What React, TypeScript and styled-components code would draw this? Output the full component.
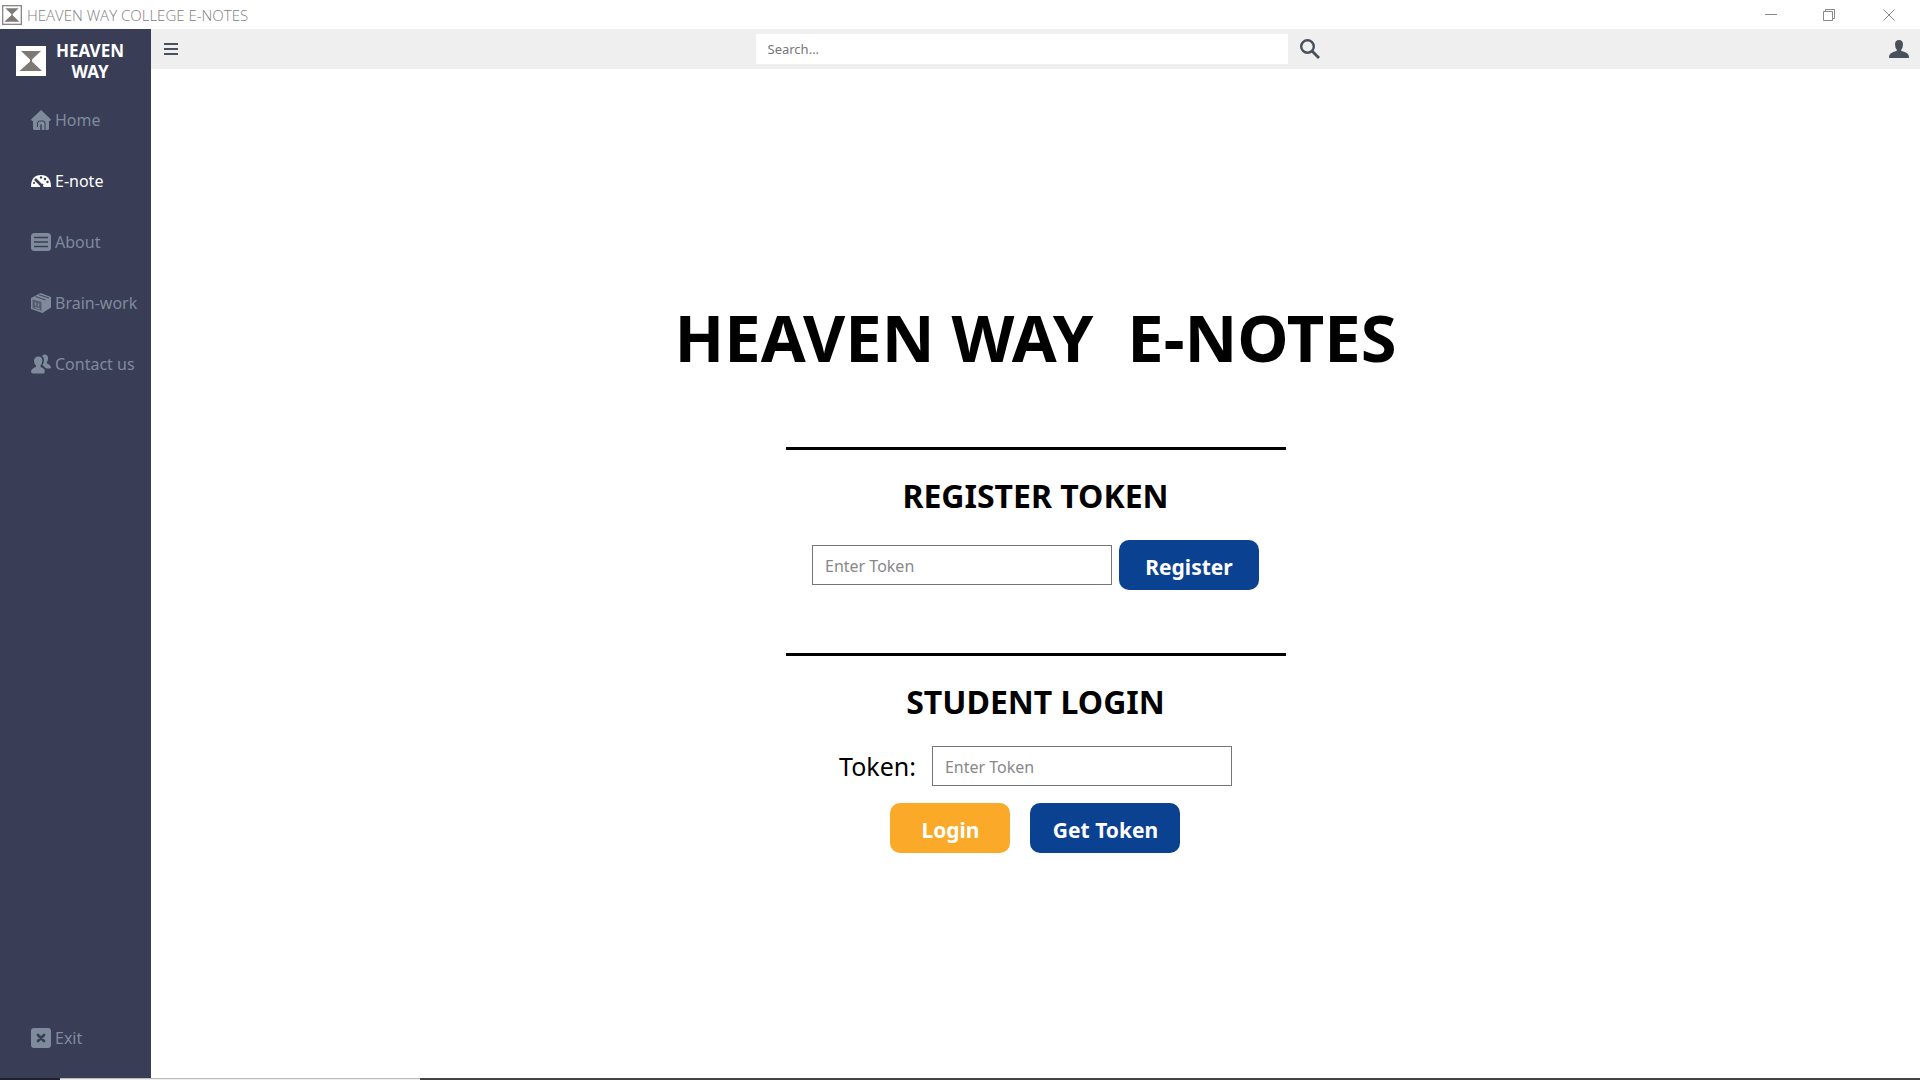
import React from "react";
import styled, { createGlobalStyle } from "styled-components";

const Global = createGlobalStyle`
  *, *::before, *::after { box-sizing: border-box; }
  body { margin: 0; background: #fff; color: #000; font-family: "Noto Sans", "Open Sans", sans-serif; }
  button, input { font-family: inherit; margin: 0; }
  button { border: 0; padding: 0; background: none; cursor: pointer; }
  svg { display: block; flex: none; }
`;

const Window = styled.div`
  display: grid;
  grid-template-rows: 29px 1fr 2px;
  min-height: 100vh;
`;

const TitleBar = styled.header`
  display: flex;
  align-items: center;
  gap: 5px;
  padding-left: 2px;
  background: #fff;
  color: #808080;
  font-size: 15px;
  line-height: 20px;
`;

const WindowTitle = styled.span`
  font-family: "Open Sans", sans-serif;
  font-weight: 300;
`;

const WindowControls = styled.div`
  display: flex;
  margin-left: auto;
`;

const WindowButton = styled.button`
  display: grid;
  place-items: center;
  width: 58px;
  height: 28px;
  color: #888;
  &:last-child { width: 62px; }
`;

const Body = styled.div`
  display: grid;
  grid-template-columns: 151px 1fr;
`;

const Sidebar = styled.aside`
  display: flex;
  flex-direction: column;
  padding: 11px 0 28px;
  background: #393e56;
`;

const Brand = styled.div`
  display: flex;
  align-items: center;
  gap: 10px;
  height: 42px;
  padding-left: 16px;
  color: #fff;
  font-size: 17px;
  line-height: 21px;
  font-weight: 700;
  text-align: center;
`;

const Nav = styled.nav`
  display: flex;
  flex: 1;
  flex-direction: column;
  gap: 37px;
  padding: 26px 0 0 31px;
`;

const NavLink = styled.a<{ $active?: boolean; $last?: boolean }>`
  display: flex;
  align-items: center;
  gap: 4px;
  height: 24px;
  margin-top: ${(p) => (p.$last ? "auto" : "0")};
  color: ${(p) => (p.$active ? "#fff" : "#7f8b9d")};
  font-size: 16px;
  line-height: 24px;
  text-decoration: none;
  white-space: nowrap;
`;

const Content = styled.div`
  display: flex;
  flex-direction: column;
  min-width: 0;
`;

const ToolBar = styled.div`
  display: flex;
  align-items: center;
  justify-content: space-between;
  height: 40px;
  padding: 0 11px 0 13px;
  background: #efefef;
  color: #48505b;
`;

const IconButton = styled.button`
  display: flex;
  align-items: center;
  min-width: 20px;
  height: 24px;
  color: inherit;
`;

const MenuButton = styled(IconButton)`
  width: 22px;
`;

const SearchForm = styled.form`
  display: flex;
  align-items: center;
  gap: 12px;
`;

const SearchInput = styled.input`
  width: 532px;
  height: 30px;
  padding: 0 12px;
  border: 0;
  background: #fff;
  font-size: 13px;
  &::placeholder { color: #777; opacity: 1; }
`;

const Main = styled.main`
  display: flex;
  flex-direction: column;
  align-items: center;
  padding-top: 218px;
`;

const Heading = styled.h1`
  margin: 0 0 60px;
  font-family: Jokerman, "Noto Sans", sans-serif;
  font-size: 65px;
  line-height: 100px;
  font-weight: 700;
  white-space: pre;
`;

const Section = styled.section`
  display: flex;
  flex-direction: column;
  align-items: center;
  width: 500px;
  border-top: 3px solid #000;
`;

const RegisterSection = styled(Section)`
  margin-bottom: 63px;
`;

const SectionTitle = styled.h2`
  margin: 22px 0 20px;
  font-size: 32px;
  line-height: 48px;
  font-weight: 700;
`;

const RegisterForm = styled.form`
  display: flex;
  align-items: center;
  gap: 7px;
`;

const LoginForm = styled.form`
  display: flex;
  flex-direction: column;
  align-items: center;
  gap: 17px;
`;

const Field = styled.div`
  display: flex;
  align-items: center;
  gap: 16px;
`;

const FieldLabel = styled.label`
  font-size: 25px;
  line-height: 40px;
`;

const TokenInput = styled.input`
  width: 300px;
  height: 40px;
  padding: 1px 12px 0;
  border: 1px solid #767676;
  background: #fff;
  font-size: 16px;
  &::placeholder { color: #888; opacity: 1; }
`;

const Actions = styled.div`
  display: flex;
  gap: 20px;
`;

const Button = styled.button<{ $tone: "blue" | "orange"; $width: number }>`
  width: ${(p) => p.$width}px;
  height: 50px;
  padding-top: 3px;
  border-radius: 10px;
  background: ${(p) => (p.$tone === "blue" ? "#0b4191" : "#faa928")};
  color: #fff;
  font-size: 21px;
  line-height: 30px;
  font-weight: 700;
`;

const BottomEdge = styled.div`
  display: grid;
  grid-template-columns: 60px 360px 1fr;
  background: #444;
`;

const EdgeDark = styled.span`
  background: #20202f;
`;

const EdgeLight = styled.span`
  background: #eee;
  border-top: 1px solid #bbb;
`;

const Logo = ({ size, framed }: { size: number; framed?: boolean }) => (
  <svg width={size} height={size} viewBox="0 0 30 30" aria-hidden="true">
    <rect x="1" y="1" width="28" height="28" fill="#fff" stroke={framed ? "#888" : "#fff"} strokeWidth="2" />
    <path d="M5 5h20l-9 8.500v2L26 25H3.500L14 15.500v-2z" fill="#7d7975" />
  </svg>
);

const HomeIcon = () => (
  <svg width="20" height="20" viewBox="0 0 20 20" fill="currentColor" aria-hidden="true">
    <path d="M10 0L20 9.500L19 11H18V18.500Q18 20 16.500 20H3.500Q2 20 2 18.500V11H1L0 9.500z" />
    <path d="M6.500 17V13Q6.500 11 8.500 11H12Q14 11 14 13V20" fill="none" stroke="#393e56" strokeWidth="1" />
    <path d="M10 14.500V20" fill="none" stroke="#393e56" strokeWidth="1.500" />
  </svg>
);

const GaugeIcon = () => (
  <svg width="20" height="20" viewBox="0 0 20 20" aria-hidden="true">
    <path d="M0 16Q0 4 10 4Q20 4 20 16H13L11 14L9 16z" fill="currentColor" />
    <g stroke="#393e56" fill="none">
      <path d="M4 8L11 15" strokeWidth="2.600" />
      <path d="M7 8L12 13" stroke="#fff" strokeWidth="1" />
      <path d="M10 16L12 13" strokeWidth="1.500" />
    </g>
    <g fill="#393e56"><circle cx="10" cy="6.500" r="1.200" /><circle cx="14" cy="8" r="1.200" /><circle cx="16.500" cy="11" r="1.200" /><circle cx="3" cy="12" r="1" /></g>
  </svg>
);

const ListIcon = () => (
  <svg width="20" height="20" viewBox="0 0 20 20" aria-hidden="true">
    <rect y="1" width="20" height="18" rx="3.500" fill="currentColor" />
    <path d="M3 5.500h14M3 10h14M3 14.500h14" stroke="#393e56" strokeWidth="1.600" />
  </svg>
);

const BoxIcon = () => (
  <svg width="20" height="20" viewBox="0 0 20 20" aria-hidden="true">
    <path d="M9.500 0L20 4V14.500L11.500 20L0 16V5z" fill="currentColor" />
    <path d="M1.500 6.300L10.500 9V18L1.500 15z" fill="#393e56" opacity=".6" />
    <path d="M4.500 3.500L14.500 7M8 1.800L18 5" stroke="#393e56" fill="none" strokeWidth=".9" />
    <path d="M4.500 9.500v3M7.500 10.500v3M4 14.500l5 1.500" stroke="currentColor" strokeWidth="1.200" />
  </svg>
);

const PeopleIcon = () => (
  <svg width="20" height="20" viewBox="0 0 20 20" fill="currentColor" aria-hidden="true">
    <path d="M11 2Q12 0 14 0.500Q17.500 1 17 5Q16.800 8 15.500 8.500Q16 10 18 10.500Q20 11.500 20 14Q17.500 15 14.500 14Q13 12.500 11.500 11Q13 8.500 13 6Q13 3 11 2z" />
    <path d="M7.500 2.500Q11.500 2.500 11.300 7Q11 10.500 9.500 11.500V13Q13.500 14 13.800 17Q14 19.500 12 19.500H2Q0 19.500 0 17.500Q0.300 14.500 5 13V11.500Q3 10 3 7Q3.200 2.500 7.500 2.500z" />
  </svg>
);

const ExitIcon = () => (
  <svg width="20" height="20" viewBox="0 0 20 20" aria-hidden="true">
    <rect width="20" height="20" rx="3" fill="currentColor" />
    <path d="M7 7l6 6M13 7l-6 6" stroke="#393e56" strokeWidth="2.800" strokeLinecap="round" />
  </svg>
);

const MenuIcon = () => (
  <svg width="14" height="14" viewBox="0 0 14 14" stroke="currentColor" strokeWidth="2" aria-hidden="true">
    <path d="M0 2h14M0 7h14M0 12h14" />
  </svg>
);

const SearchIcon = () => (
  <svg width="20" height="20" viewBox="0 0 20 20" fill="none" stroke="currentColor" aria-hidden="true">
    <circle cx="7.500" cy="7.500" r="6.300" strokeWidth="2.400" />
    <path d="M12 12l7 7" strokeWidth="2.800" />
  </svg>
);

const UserIcon = () => (
  <svg width="20" height="20" viewBox="0 0 20 20" fill="currentColor" aria-hidden="true">
    <path d="M10 1Q14 1 14 5.500Q13.800 9 12.300 10.500V12Q18.500 13.500 19.500 16Q20 17 20 19H0Q0 17 .5 16Q1.500 13.500 7.700 12V10.500Q6.200 9 6 5.500Q6 1 10 1z" />
  </svg>
);

const controls = [
  { label: "Minimize", path: "M0 5.500h12" },
  { label: "Restore", path: "M.5 2.500h9v9h-9zM2.500 2.500v-2h9v9h-2" },
  { label: "Close", path: "M.5 .5l11 11M11.500 .5l-11 11" },
];

const links = [
  { label: "Home", Icon: HomeIcon },
  { label: "E-note", Icon: GaugeIcon, active: true },
  { label: "About", Icon: ListIcon },
  { label: "Brain-work", Icon: BoxIcon },
  { label: "Contact us", Icon: PeopleIcon },
  { label: "Exit", Icon: ExitIcon, last: true },
];

const stop = (e: React.FormEvent) => e.preventDefault();

export default function App() {
  return (
    <Window>
      <Global />
      <TitleBar>
        <Logo size={20} framed />
        <WindowTitle>HEAVEN WAY COLLEGE E-NOTES</WindowTitle>
        <WindowControls>
          {controls.map((c) => (
            <WindowButton key={c.label} type="button" aria-label={c.label}>
              <svg width="12" height="12" viewBox="0 0 12 12" fill="none" stroke="currentColor">
                <path d={c.path} />
              </svg>
            </WindowButton>
          ))}
        </WindowControls>
      </TitleBar>
      <Body>
        <Sidebar>
          <Brand>
            <Logo size={30} />
            <span>HEAVEN<br />WAY</span>
          </Brand>
          <Nav>
            {links.map(({ label, Icon, active, last }) => (
              <NavLink key={label} href="#" $active={active} $last={last}>
                <Icon />
                {label}
              </NavLink>
            ))}
          </Nav>
        </Sidebar>
        <Content>
          <ToolBar>
            <MenuButton type="button" aria-label="Menu"><MenuIcon /></MenuButton>
            <SearchForm onSubmit={stop}>
              <SearchInput type="text" aria-label="Search" placeholder="Search..." />
              <IconButton type="submit" aria-label="Search"><SearchIcon /></IconButton>
            </SearchForm>
            <IconButton type="button" aria-label="Profile"><UserIcon /></IconButton>
          </ToolBar>
          <Main>
            <Heading>{"HEAVEN WAY  E-NOTES"}</Heading>
            <RegisterSection>
              <SectionTitle>REGISTER TOKEN</SectionTitle>
              <RegisterForm onSubmit={stop}>
                <TokenInput type="text" aria-label="Register token" placeholder="Enter Token" />
                <Button type="submit" $tone="blue" $width={140}>Register</Button>
              </RegisterForm>
            </RegisterSection>
            <Section>
              <SectionTitle>STUDENT LOGIN</SectionTitle>
              <LoginForm onSubmit={stop}>
                <Field>
                  <FieldLabel htmlFor="token">Token:</FieldLabel>
                  <TokenInput id="token" type="text" placeholder="Enter Token" />
                </Field>
                <Actions>
                  <Button type="submit" $tone="orange" $width={120}>Login</Button>
                  <Button type="button" $tone="blue" $width={150}>Get Token</Button>
                </Actions>
              </LoginForm>
            </Section>
          </Main>
        </Content>
      </Body>
      <BottomEdge>
        <EdgeDark />
        <EdgeLight />
      </BottomEdge>
    </Window>
  );
}
